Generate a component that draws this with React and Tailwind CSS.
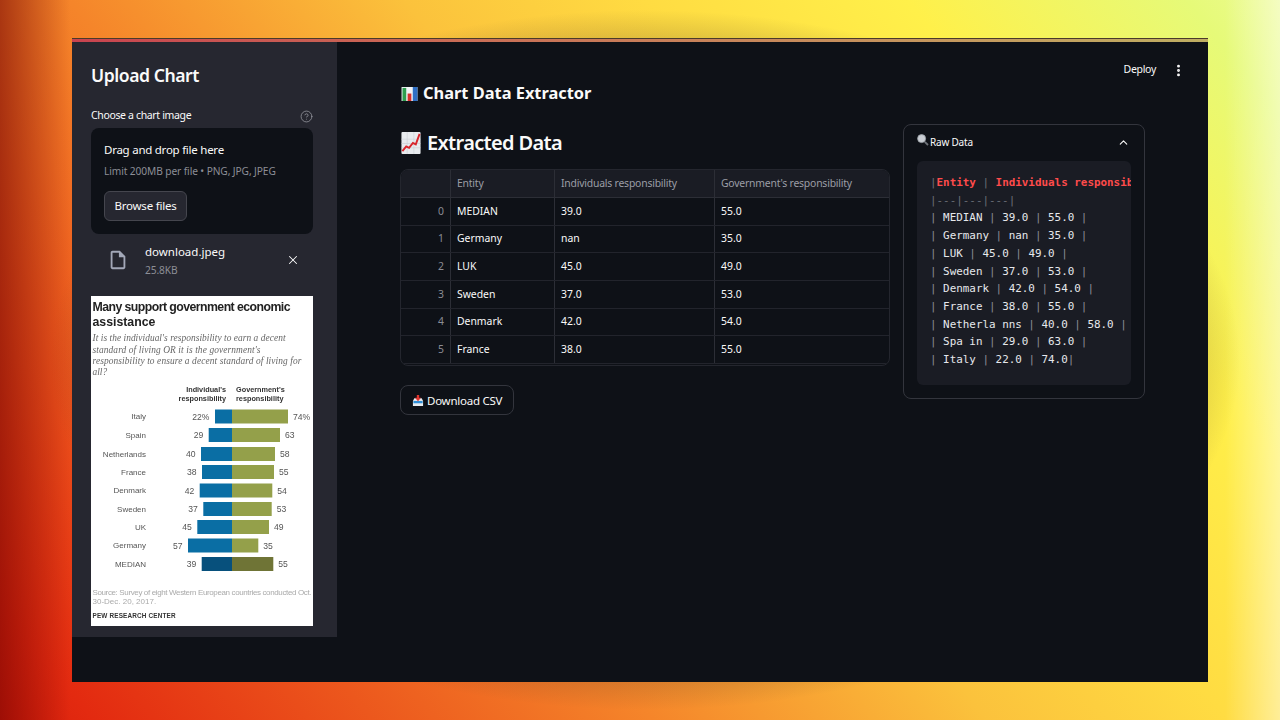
import { CircleHelp, X, ChevronUp, EllipsisVertical } from 'lucide-react';

const tableRows = [
  ['MEDIAN', '39.0', '55.0'],
  ['Germany', 'nan', '35.0'],
  ['LUK', '45.0', '49.0'],
  ['Sweden', '37.0', '53.0'],
  ['Denmark', '42.0', '54.0'],
  ['France', '38.0', '55.0'],
];

const rawLines = [
  '| MEDIAN | 39.0 | 55.0 |',
  '| Germany | nan | 35.0 |',
  '| LUK | 45.0 | 49.0 |',
  '| Sweden | 37.0 | 53.0 |',
  '| Denmark | 42.0 | 54.0 |',
  '| France | 38.0 | 55.0 |',
  '| Netherla nns | 40.0 | 58.0 |',
  '| Spa in | 29.0 | 63.0 |',
  '| Italy | 22.0 | 74.0|',
];

// name, left value, right value, blue bar start, green bar end, row centre (chart coordinates)
const chartRows = [
  ['Italy', '22%', '74%', 124, 197, 120.5],
  ['Spain', '29', '63', 117.7, 189, 139],
  ['Netherlands', '40', '58', 110, 184, 158],
  ['France', '38', '55', 111, 183, 176],
  ['Denmark', '42', '54', 108.7, 181.3, 194.5],
  ['Sweden', '37', '53', 112.3, 180.7, 213],
  ['UK', '45', '49', 106.3, 178, 231],
  ['Germany', '57', '35', 97, 167.3, 249.5],
  ['MEDIAN', '39', '55', 110.7, 182.3, 268],
];

function ChartEmoji() {
  return (
    <svg width="17" height="14" viewBox="0 0 17 15" className="shrink-0 ml-[1px] mt-[2px]">
      <rect width="17" height="15" fill="#f1f3f5" />
      <rect x="1" y="1" width="4" height="14" fill="#2e9e4f" />
      <rect x="6.5" y="7" width="4" height="8" fill="#d9302c" />
      <rect x="12" y="0" width="5" height="15" fill="#2f6fc4" />
    </svg>
  );
}

function TrendEmoji() {
  return (
    <svg width="20" height="22" viewBox="0 0 20 23" className="shrink-0 ml-[1px]">
      <rect width="20" height="23" rx="1" fill="#e8ebee" />
      <path d="M0 7.5H20M0 12H20M0 16.5H20M6 0V23M13 0V23" stroke="#c6ccd2" strokeWidth="0.6" />
      <path d="M1 20L5 15L8 16.5L12 11.5L15 13L19 2" stroke="#d8262c" strokeWidth="2" fill="none" />
    </svg>
  );
}

function SearchEmoji() {
  return (
    <svg width="12" height="12" viewBox="0 0 12 12" className="shrink-0 -mt-[4px]">
      <circle cx="4.6" cy="4.6" r="4" fill="#c9ced4" stroke="#9ea4ab" strokeWidth="0.8" />
      <path d="M7.8 7.8L11 11" stroke="#6d7278" strokeWidth="1.8" />
    </svg>
  );
}

function InboxEmoji() {
  return (
    <svg width="12" height="13" viewBox="0 0 13 13" className="shrink-0">
      <path d="M1 7L2.5 4H10.5L12 7V12.5H1Z" fill="#e8ecf0" />
      <path d="M1.5 7H11.5V9.5H1.5Z" fill="#2f8fd8" />
      <path d="M5.2 0.5H7.8V3.5H9.8L6.5 7.2L3.2 3.5H5.2Z" fill="#e0352f" />
    </svg>
  );
}

function FileIcon() {
  return (
    <svg width="22" height="22" viewBox="0 0 24 24" fill="#a3a8b8">
      <path d="M14 2H6c-1.1 0-2 .9-2 2v16c0 1.1.9 2 2 2h12c1.1 0 2-.9 2-2V8l-6-6zM6 20V4h7v5h5v11H6z" />
    </svg>
  );
}

// the uploaded chart picture, drawn as svg with real text
function PewChart() {
  return (
    <svg width="222" height="330" viewBox="0 0 222 330" fontFamily="'Liberation Sans', Arial, sans-serif" className="block bg-white blur-[0.4px]">
      <text x="1.5" y="14.5" fontSize="12.3" fontWeight="700" fill="#222" textLength="198">Many support government economic</text>
      <text x="1.5" y="29.5" fontSize="12.3" fontWeight="700" fill="#222">assistance</text>
      <g fontFamily="'Liberation Serif', serif" fontStyle="italic" fontSize="9.4" fill="#666">
        <text x="1.5" y="44.5" textLength="193">It is the individual's responsibility to earn a decent</text>
        <text x="1.5" y="57" textLength="168">standard of living OR it is the government's</text>
        <text x="1.5" y="68" textLength="209">responsibility to ensure a decent standard of living for</text>
        <text x="1.5" y="79">all?</text>
      </g>
      <g fontSize="7.3" fontWeight="700" fill="#333">
        <text x="135" y="96" textAnchor="end">Individual's</text>
        <text x="135" y="105" textAnchor="end">responsibility</text>
        <text x="145" y="96">Government's</text>
        <text x="145" y="105">responsibility</text>
      </g>
      {chartRows.map(([name, left, right, start, end, y], i) => {
        const median = i === chartRows.length - 1;
        return (
          <g key={name} fontSize="8" fill="#555">
            <text x="55" y={y + 2.8} textAnchor="end">{name}</text>
            <text x={start - 5.5} y={y + 3} textAnchor="end" fontSize="8.6">{left}</text>
            <rect x={start} y={y - 7} width={141 - start} height="14" fill={median ? '#07507c' : '#0a6ea4'} />
            <rect x="141" y={y - 7} width={end - 141} height="14" fill={median ? '#6f7436' : '#94a04a'} />
            <text x={end + 5} y={y + 3} fontSize="8.6">{right}</text>
          </g>
        );
      })}
      <text x="1.5" y="299" fontSize="8" fill="#aaa" textLength="219">Source: Survey of eight Western European countries conducted Oct.</text>
      <text x="1.5" y="308" fontSize="8" fill="#aaa">30-Dec. 20, 2017.</text>
      <text x="1.5" y="322" fontSize="6.4" fontWeight="700" fill="#333" textLength="83">PEW RESEARCH CENTER</text>
    </svg>
  );
}

function Sidebar() {
  return (
    <aside className="w-[265px] h-[595px] shrink-0 bg-[#262730] pl-[19px] pr-[24px] pt-[21px]">
      <h2 className="text-[17.6px] leading-[24px] font-semibold tracking-[-0.45px] text-[#fafafa]">Upload Chart</h2>
      <div className="mt-[22px] flex items-center justify-between h-[14px]">
        <span className="text-[10.5px] tracking-[-0.35px] text-[#fafafa]">Choose a chart image</span>
        <CircleHelp size={13} strokeWidth={1.4} className="text-[#9a9ca4]" />
      </div>
      <div className="mt-[5px] h-[106px] rounded-lg bg-[#0e1117] px-[13px] pt-[13px]">
        <p className="text-[11.5px] leading-[18px] tracking-[-0.25px] text-[#fafafa]">Drag and drop file here</p>
        <p className="mt-[5px] text-[10.2px] leading-[14px] tracking-[-0.1px] text-[#8c8e96]">Limit 200MB per file • PNG, JPG, JPEG</p>
        <button className="mt-[13px] h-[30px] w-[83px] rounded-md border border-[#45464e] bg-[#262730] text-[11.5px] tracking-[-0.2px] text-[#fafafa]">
          Browse files
        </button>
      </div>
      <div className="mt-[4px] h-[44px] flex items-center pl-[16px] pr-[13px]">
        <FileIcon />
        <div className="ml-[16px] flex-1 pt-[1px]">
          <p className="text-[11.5px] leading-[18px] text-[#fafafa]">download.jpeg</p>
          <p className="mt-[1px] text-[10.2px] leading-[16px] tracking-[-0.1px] text-[#8c8e96]">25.8KB</p>
        </div>
        <X size={14} strokeWidth={1.8} className="text-[#fafafa]" />
      </div>
      <div className="mt-[14px]">
        <PewChart />
      </div>
    </aside>
  );
}

function DataTable() {
  const cols = 'grid grid-cols-[50px_104px_160px_1fr]';
  return (
    <div className="rounded-lg border border-[#24262e] overflow-hidden pb-[1px] text-[10.4px]">
      <div className={`${cols} h-[28px] bg-[#1a1c24] border-b border-[#2c2e36] text-[#9c9ea6] tracking-[-0.2px]`}>
        <div className="border-r border-[#2c2e36]" />
        <div className="flex items-center px-[6px] border-r border-[#2c2e36]">Entity</div>
        <div className="flex items-center px-[6px] border-r border-[#2c2e36]">Individuals responsibility</div>
        <div className="flex items-center px-[6px]">Government's responsibility</div>
      </div>
      {tableRows.map((row, i) => (
        <div key={row[0]} className={`${cols} h-[27.7px] border-b border-[#22242c] text-[#fafafa]`}>
          <div className="flex items-center justify-end pr-[6px] border-r border-[#2c2e36] text-[#8a8c94]">{i}</div>
          {row.map((cell, j) => (
            <div key={j} className={`flex items-center px-[6px] ${j < 2 ? 'border-r border-[#2c2e36]' : ''}`}>
              {cell}
            </div>
          ))}
        </div>
      ))}
    </div>
  );
}

function RawData() {
  return (
    <div className="w-[242px] h-[275px] shrink-0 rounded-lg border border-[#33353d] px-[13px]">
      <div className="h-[34px] mb-[2px] flex items-center pr-[1px] text-[10px] tracking-[-0.2px] text-[#fafafa]">
        <SearchEmoji />
        <span className="ml-[1px] flex-1">Raw Data</span>
        <ChevronUp size={13} strokeWidth={2} />
      </div>
      <pre className="h-[224px] rounded-md bg-[#1a1c24] pl-[13px] pt-[13px] overflow-hidden font-['DejaVu_Sans_Mono',monospace] text-[10.9px] leading-[17.7px] text-[#e6e8ec]">
        <div className="whitespace-pre font-bold text-[#ff4b4b]">
          <span className="font-normal text-[#6b6e76]">|</span>Entity <span className="font-normal text-[#6b6e76]">|</span> Individuals responsibility
        </div>
        <div className="text-[#6b6e76]">|---|---|---|</div>
        {rawLines.map((line) => (
          <div key={line}>
            {line.split('|').map((part, i) => (
              <span key={i}>
                {i > 0 && <span className="text-[#8a8c94]">|</span>}
                {part}
              </span>
            ))}
          </div>
        ))}
      </pre>
    </div>
  );
}

export default function App() {
  return (
    <div className="h-screen w-full overflow-hidden px-[72px] pt-[38px] pb-[38px] font-['Noto_Sans',sans-serif] bg-[image:linear-gradient(90deg,rgba(110,0,0,0.55)_0,rgba(110,0,0,0)_70px,rgba(255,255,255,0)_1225px,rgba(255,255,255,0.45)_1280px),radial-gradient(ellipse_595px_350px_at_645px_360px,rgba(80,60,40,0.32)_85%,rgba(80,60,40,0)_100%),linear-gradient(51deg,#d81f0c_0%,#e32a10_5%,#f5852a_35%,#fbc23c_53%,#ffdc42_66%,#fff04a_80%,#e6fa78_95%,#ecfb90_100%)]">
      <div className="h-full flex flex-col bg-[#0e1117]">
        <div className="h-[4px] shrink-0 border-t border-[#4a3a2a] bg-gradient-to-r from-[#c8434f] to-[#bfae62]" />
        <div className="flex-1 flex min-h-0">
          <Sidebar />
          <main className="flex-1 pl-[63px] pr-[22px] pt-[19px]">
            <div className="h-[18px] flex items-center justify-end gap-[15px] text-[10.5px] tracking-[-0.3px] text-[#fafafa]">
              <span>Deploy</span>
              <EllipsisVertical size={15} strokeWidth={2.6} />
            </div>
            <h1 className="mt-[3px] flex items-center gap-[5px] h-[22px] text-[16.4px] font-bold text-[#fafafa]">
              <ChartEmoji />
              Chart Data Extractor
            </h1>
            <div className="mt-[20px] flex items-start gap-[13px]">
              <div className="w-[490px] shrink-0">
                <h2 className="h-[45px] flex items-center gap-[6px] pb-[11px] pt-[3px] text-[20px] tracking-[-0.65px] font-semibold text-[#fafafa]">
                  <TrendEmoji />
                  Extracted Data
                </h2>
                <DataTable />
                <button className="mt-[19px] h-[30px] w-[114px] flex items-center justify-start pl-[11px] gap-[3px] rounded-lg border border-[#33353d] text-[11.5px] tracking-[-0.25px] text-[#fafafa]">
                  <InboxEmoji />
                  Download CSV
                </button>
              </div>
              <RawData />
            </div>
          </main>
        </div>
      </div>
    </div>
  );
}
